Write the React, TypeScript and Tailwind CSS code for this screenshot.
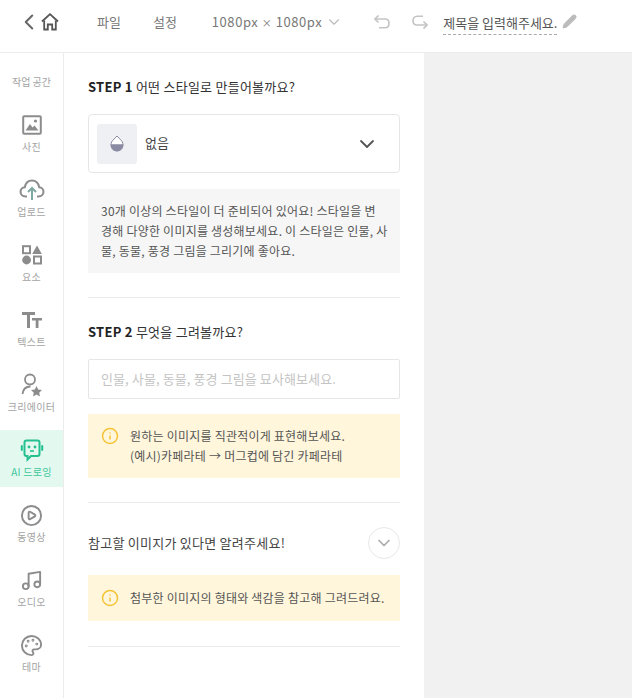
import React from "react";
import { ChevronDown, ChevronLeft, CirclePlay, Info, Music, Palette, Pencil } from "lucide-react";

const font = { fontFamily: '"Noto Sans CJK KR", "Noto Sans", sans-serif' };

const ImageIcon = () => (
  <svg width="20" height="20" viewBox="0 0 20 20" fill="none">
    <rect x="1.2" y="1.2" width="17.6" height="17.6" rx="1" stroke="#8c8c8c" strokeWidth="2" />
    <circle cx="13.5" cy="6" r="1.6" fill="#8c8c8c" />
    <path d="M3.5 15.5 L8 9 L10.5 12.5 L12.5 10.5 L16.5 15.5 Z" fill="#8c8c8c" />
  </svg>
);

const UploadIcon = () => (
  <svg width="26" height="22" viewBox="0 0 26 22" fill="none">
    <path
      d="M8 17.5H6.5C3.5 17.5 1.5 15.4 1.5 12.8C1.5 10.3 3.4 8.4 5.8 8.2C6.6 4.3 9.4 1.5 13 1.5C16.6 1.5 19.4 4.2 20.2 8.2C22.6 8.4 24.5 10.3 24.5 12.8C24.5 15.4 22.5 17.5 19.5 17.5H18"
      stroke="#8c8c8c"
      strokeWidth="2"
    />
    <path d="M13 21V9.5M9 13L13 9L17 13" stroke="#7fa8a0" strokeWidth="2" />
  </svg>
);

const ElementIcon = () => (
  <svg width="20" height="20" viewBox="0 0 20 20" fill="none">
    <rect x="1" y="1.2" width="7" height="7" stroke="#8c8c8c" strokeWidth="2" />
    <path d="M15 0.5L19.8 9H10.2Z" fill="#8c8c8c" />
    <circle cx="4.6" cy="15" r="4.4" fill="#8c8c8c" />
    <rect x="12" y="11.5" width="7" height="7" stroke="#8c8c8c" strokeWidth="2" />
  </svg>
);

const TextIcon = () => (
  <svg width="20" height="16" viewBox="0 0 20 16" fill="#8c8c8c">
    <path d="M0 0H13V3H8V16H5V3H0Z" />
    <path d="M10 6H20V8.5H16.5V16H13.7V8.5H10Z" />
  </svg>
);

const CreatorIcon = () => (
  <svg width="22" height="24" viewBox="0 0 22 24" fill="none">
    <circle cx="9" cy="6.5" r="5" stroke="#8c8c8c" strokeWidth="1.8" />
    <path d="M1.5 21C2 16.5 5 13.5 9.5 13.5" stroke="#8c8c8c" strokeWidth="1.8" />
    <path d="M15.5 13L17.2 16.6L21 17.1L18.2 19.7L19 23.5L15.5 21.6L12 23.5L12.8 19.7L10 17.1L13.8 16.6Z" fill="#8c8c8c" />
  </svg>
);

const RobotIcon = () => (
  <svg width="24" height="24" viewBox="0 0 24 24" fill="none">
    <path
      d="M6.5 2.5H17.5C18.6 2.5 19.5 3.4 19.5 4.5V16C19.5 17.1 18.6 18 17.5 18H11L7.5 21.5V18H6.5C5.4 18 4.5 17.1 4.5 16V4.5C4.5 3.4 5.4 2.5 6.5 2.5Z"
      stroke="#24c08f"
      strokeWidth="2"
    />
    <rect x="0.8" y="7" width="2" height="6" rx="1" fill="#24c08f" />
    <rect x="21.2" y="7" width="2" height="6" rx="1" fill="#24c08f" />
    <circle cx="9" cy="9" r="1.4" fill="#24c08f" />
    <circle cx="15" cy="9" r="1.4" fill="#24c08f" />
    <path d="M10 13H14" stroke="#24c08f" strokeWidth="1.6" />
  </svg>
);

const HomeIcon = () => (
  <svg width="18" height="18" viewBox="0 0 18 18" fill="none">
    <path d="M1 8.5L9 1.2L17 8.5" stroke="#555" strokeWidth="1.8" />
    <path d="M3.2 7.5V16.5H6.8V11.5H11.2V16.5H14.8V7.5" stroke="#555" strokeWidth="1.8" />
  </svg>
);

const DropIcon = () => (
  <svg width="14" height="17" viewBox="0 0 14 17" fill="none">
    <path d="M7 1L11.5 5.7C14.3 8.6 13.2 16 7 16C0.8 16 -0.3 8.6 2.5 5.7Z" fill="#fff" stroke="#8a8aa3" strokeWidth="1" />
    <path d="M0.7 9.2H13.3C13.4 12.6 11 16.2 7 16.2C3 16.2 0.6 12.6 0.7 9.2Z" fill="#8a8aa3" />
  </svg>
);

const UndoIcon = () => (
  <svg width="16" height="14" viewBox="0 0 16 14" fill="none">
    <path d="M1 4H11C13.5 4 15 5.7 15 8.2C15 10.8 13.5 12.8 11 12.8H5" stroke="#c4c4c4" strokeWidth="1.6" />
    <path d="M4.5 0.5L1 4L4.5 7.5" stroke="#c4c4c4" strokeWidth="1.6" />
  </svg>
);

const RedoIcon = () => (
  <svg width="16" height="14" viewBox="0 0 16 14" fill="none">
    <path d="M11 1.2H5C2.5 1.2 1 3.2 1 5.8C1 8.3 2.5 10 5 10H15" stroke="#c4c4c4" strokeWidth="1.6" />
    <path d="M11.5 6.5L15 10L11.5 13.5" stroke="#c4c4c4" strokeWidth="1.6" />
  </svg>
);

const menu = [
  { label: "사진", icon: <ImageIcon /> },
  { label: "업로드", icon: <UploadIcon /> },
  { label: "요소", icon: <ElementIcon /> },
  { label: "텍스트", icon: <TextIcon /> },
  { label: "크리에이터", icon: <CreatorIcon /> },
  { label: "AI 드로잉", icon: <RobotIcon />, active: true },
  { label: "동영상", icon: <CirclePlay size={23} strokeWidth={2} color="#8c8c8c" /> },
  { label: "오디오", icon: <Music size={23} strokeWidth={2} color="#8c8c8c" /> },
  { label: "테마", icon: <Palette size={23} strokeWidth={2} color="#8c8c8c" /> },
];

const Notice = ({ lines, className }: { lines: string[]; className: string }) => (
  <div className={`flex items-start gap-[11px] bg-[#fff6dc] pl-[13px] pr-2 text-[12px] tracking-[0.22px] leading-[20px] text-[#555] ${className}`}>
    <Info size={18} strokeWidth={2} color="#f5c336" className="mt-[1px] shrink-0" />
    <div>
      {lines.map((line) => (
        <p key={line} className="whitespace-nowrap">{line}</p>
      ))}
    </div>
  </div>
);

export default function App() {
  return (
    <div style={font} className="flex flex-col h-[698px] w-[632px] overflow-hidden bg-white">
      <header className="flex items-center h-[53px] pb-[8px] shrink-0 border-b border-[#ececec] text-[13px] text-[#777]">
        <ChevronLeft size={26} strokeWidth={1.8} color="#666" className="ml-[16px]" />
        <span className="-ml-[1px]"><HomeIcon /></span>
        <span className="ml-[38px]">파일</span>
        <span className="ml-[32px]">설정</span>
        <span className="ml-[35px] whitespace-nowrap tracking-[0.55px]">1080px <span className="text-[10px]">×</span> 1080px</span>
        <ChevronDown size={18} strokeWidth={1.5} color="#bbb" className="ml-[3px]" />
        <span className="ml-[31px]"><UndoIcon /></span>
        <span className="ml-[22px]"><RedoIcon /></span>
        <span className="ml-[15px] mt-[4px] border-b border-dashed border-[#aaa] pb-[2px] text-[#555] whitespace-nowrap">제목을 입력해주세요.</span>
        <Pencil size={15} fill="#bbb" color="#bbb" className="ml-[5px] -mt-[2px]" />
      </header>

      <div className="flex flex-1 min-h-0">
        <nav className="w-[64px] shrink-0 border-r border-[#ececec] flex flex-col">
          <p className="h-[52px] pt-[20px] text-center text-[10px] leading-[18px] text-[#a3a3a3]">작업 공간</p>
          <div className="flex flex-col gap-[8px]">
            {menu.map((item) => (
              <div
                key={item.label}
                className={
                  item.active
                    ? "h-[57px] flex flex-col items-center bg-[#e3f8ef] text-[#3cc79a]"
                    : "h-[57px] flex flex-col items-center text-[#a3a3a3]"
                }
              >
                <div className="h-[26px] mt-[7px] flex items-center justify-center">{item.icon}</div>
                <span className="mt-[1px] text-[10px] tracking-[0.3px] leading-[16px] whitespace-nowrap">{item.label}</span>
              </div>
            ))}
          </div>
        </nav>

        <main className="w-[360px] shrink-0 px-[24px] pt-[23px]">
          <h2 className="text-[13px] tracking-[0.25px] leading-[22px] text-[#333]">
            <b className="font-bold text-[#222]">STEP 1</b> 어떤 스타일로 만들어볼까요?
          </h2>
          <div className="mt-[16px] h-[59px] flex items-center border border-[#e6e6e6] rounded-[4px] pl-[8px] pr-[20px]">
            <div className="w-[40px] h-[40px] rounded-[3px] bg-[#eff0f3] flex items-center justify-center">
              <DropIcon />
            </div>
            <span className="ml-[8px] mb-[2px] text-[13px] text-[#444]">없음</span>
            <ChevronDown size={24} strokeWidth={1.8} color="#555" className="ml-auto" />
          </div>
          <div className="mt-[16px] h-[84px] bg-[#f6f6f6] px-[13px] py-[12px] text-[12px] tracking-[0.22px] leading-[20px] text-[#555] whitespace-nowrap">
            30개 이상의 스타일이 더 준비되어 있어요! 스타일을 변<br />
            경해 다양한 이미지를 생성해보세요. 이 스타일은 인물, 사<br />
            물, 동물, 풍경 그림을 그리기에 좋아요.
          </div>
          <hr className="mt-[24px] border-[#ececec]" />

          <h2 className="mt-[23px] text-[13px] tracking-[0.25px] leading-[22px] text-[#333]">
            <b className="font-bold text-[#222]">STEP 2</b> 무엇을 그려볼까요?
          </h2>
          <div className="mt-[16px] h-[40px] flex items-center border border-[#e6e6e6] rounded-[2px] px-[12px] text-[13px] tracking-[0.1px] text-[#c4c4c4]">
            인물, 사물, 동물, 풍경 그림을 묘사해보세요.
          </div>
          <div className="mt-[15px]">
            <Notice className="py-[12px]" lines={["원하는 이미지를 직관적이게 표현해보세요.", "(예시)카페라테 → 머그컵에 담긴 카페라테"]} />
          </div>
          <hr className="mt-[24px] border-[#ececec]" />

          <div className="mt-[24px] flex items-center justify-between">
            <span className="text-[13px] tracking-[0.25px] text-[#444]">참고할 이미지가 있다면 알려주세요!</span>
            <div className="w-[32px] h-[32px] rounded-full border border-[#e8e8e8] flex items-center justify-center">
              <ChevronDown size={20} strokeWidth={2} color="#aaa" />
            </div>
          </div>
          <div className="mt-[16px]">
            <Notice className="py-[13px]" lines={["첨부한 이미지의 형태와 색감을 참고해 그려드려요."]} />
          </div>
          <hr className="mt-[25px] border-[#ececec]" />
        </main>

        <div className="flex-1 bg-[#f1f1f1]" />
      </div>
    </div>
  );
}
